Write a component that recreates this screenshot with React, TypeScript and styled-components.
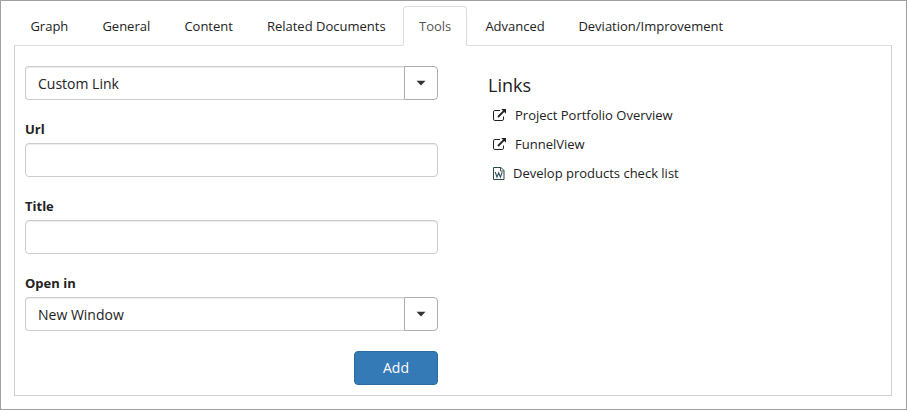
import React from 'react';
import styled, { createGlobalStyle } from 'styled-components';

const GlobalStyle = createGlobalStyle`
  *, *::before, *::after { box-sizing: border-box; }
  body {
    margin: 0;
    background: #fff;
    color: #222;
    font-family: 'Open Sans', sans-serif;
    font-size: 13px;
    line-height: 18px;
  }
`;

const Frame = styled.div`
  width: 907px;
  height: 410px;
  padding: 5px 14px 13px 13px;
  border: 1px solid #a0a0a0;
  display: flex;
  flex-direction: column;
`;

const TabBar = styled.nav`
  display: flex;
  height: 40px;
  flex: none;
  margin-bottom: -1px;
`;

const Tab = styled.a<{ $active?: boolean; $width: number }>`
  width: ${(p) => p.$width}px;
  height: 40px;
  flex: none;
  margin-right: 2px;
  padding: 10px 0 0 15px;
  white-space: nowrap;
  border: 1px solid ${(p) => (p.$active ? '#ddd' : 'transparent')};
  border-bottom-color: ${(p) => (p.$active ? '#fff' : 'transparent')};
  border-radius: 4px 4px 0 0;
  background: ${(p) => (p.$active ? '#fff' : 'transparent')};
  color: ${(p) => (p.$active ? '#555' : '#222')};
  position: ${(p) => (p.$active ? 'relative' : 'static')};
`;

const Panel = styled.main`
  flex: 1;
  display: flex;
  padding: 20px 10px 0;
  border: 1px solid #d0d0d0;
  border-top-color: #ddd;
`;

const Form = styled.form`
  width: 413px;
  display: flex;
  flex-direction: column;
`;

const Label = styled.label`
  height: 43px;
  padding-top: 20px;
  font-weight: 700;
`;

const Input = styled.input`
  width: 100%;
  min-width: 0;
  height: 34px;
  padding: 6px 12px;
  border: 1px solid #ccc;
  border-radius: 4px;
  background: #fff;
  box-shadow: inset 0 1px 1px rgba(0, 0, 0, 0.075);
  color: #222;
  font: 14px/20px 'Open Sans', sans-serif;
  outline: none;
`;

const Combo = styled.div`
  display: flex;

  ${Input} {
    flex: 1;
    border-right: 0;
    border-radius: 4px 0 0 4px;
  }
`;

const ComboButton = styled.button`
  width: 34px;
  height: 34px;
  padding: 0;
  display: flex;
  align-items: center;
  justify-content: center;
  border: 1px solid #adadad;
  border-radius: 0 4px 4px 0;
  background: #fff;
`;

const AddButton = styled.button`
  align-self: flex-end;
  width: 84px;
  height: 34px;
  margin-top: 20px;
  padding: 0;
  border: 1px solid #2e6da4;
  border-radius: 4px;
  background: #337ab7;
  color: #fff;
  font: 14px/20px 'Open Sans', sans-serif;
`;

const Links = styled.section`
  margin-left: 50px;
`;

const Heading = styled.h2`
  margin: 9px 0 5px;
  font-size: 18px;
  font-weight: 400;
  line-height: 20px;
`;

const LinkRow = styled.a`
  height: 29px;
  padding-left: 5px;
  display: flex;
  align-items: center;
  gap: 8px;
  white-space: nowrap;

  svg { flex: none; }
`;

const Caret = () => (
  <svg width="10" height="6" viewBox="0 0 10 6">
    <path d="M0.5 0.7H9.5L5 5.4Z" fill="#333" />
  </svg>
);

const ExternalIcon = () => (
  <svg width="14" height="12" viewBox="0 0 14 12">
    <path d="M7 1.5H1.9Q0.5 1.5 0.5 2.9V10.1Q0.5 11.5 1.9 11.5H9.1Q10.5 11.5 10.5 10.1V7.5" fill="none" stroke="#222" />
    <path d="M5 8L11.3 1.7" stroke="#222" strokeWidth="1.8" />
    <path d="M8.2 0H13V4.8Z" fill="#222" />
  </svg>
);

const WordIcon = () => (
  <svg width="12" height="14" viewBox="0 0 12 14" fill="none">
    <path d="M0.5 1.5H8L11 4.5V13.5H0.5Z" stroke="#2c4a40" />
    <path d="M7.5 1.5V5H11" stroke="#2c4a40" strokeWidth="0.9" />
    <path d="M2.2 6L4 11.2L5.7 6.8L7.4 11.2L9.2 6" stroke="#355563" strokeWidth="1.1" />
  </svg>
);

const tabs = [
  { label: 'Graph', width: 70 },
  { label: 'General', width: 80 },
  { label: 'Content', width: 80.5 },
  { label: 'Related Documents', width: 150.5 },
  { label: 'Tools', width: 64, active: true },
  { label: 'Advanced', width: 91 },
  { label: 'Deviation/Improvement', width: 177 },
];

const TabLabel = styled.span<{ $active?: boolean }>`
  margin-left: ${(p) => (p.$active ? 0 : 0.4)}px;
`;

const Select = ({ value, name }: { value: string; name: string }) => (
  <Combo>
    <Input aria-label={name} defaultValue={value} />
    <ComboButton type="button" aria-label={`Choose ${name}`}>
      <Caret />
    </ComboButton>
  </Combo>
);

export default function App() {
  return (
    <>
      <GlobalStyle />
      <Frame>
        <TabBar>
          {tabs.map((t) => (
            <Tab key={t.label} $active={t.active} $width={t.width}>
              <TabLabel $active={t.active}>{t.label}</TabLabel>
            </Tab>
          ))}
        </TabBar>
        <Panel>
          <Form>
            <Select name="link type" value="Custom Link" />
            <Label htmlFor="url">Url</Label>
            <Input id="url" />
            <Label htmlFor="title">Title</Label>
            <Input id="title" />
            <Label>Open in</Label>
            <Select name="target" value="New Window" />
            <AddButton type="button">Add</AddButton>
          </Form>
          <Links>
            <Heading>Links</Heading>
            <LinkRow>
              <ExternalIcon />
              <span>Project Portfolio Overview</span>
            </LinkRow>
            <LinkRow>
              <ExternalIcon />
              <span>FunnelView</span>
            </LinkRow>
            <LinkRow>
              <WordIcon />
              <span>Develop products check list</span>
            </LinkRow>
          </Links>
        </Panel>
      </Frame>
    </>
  );
}
